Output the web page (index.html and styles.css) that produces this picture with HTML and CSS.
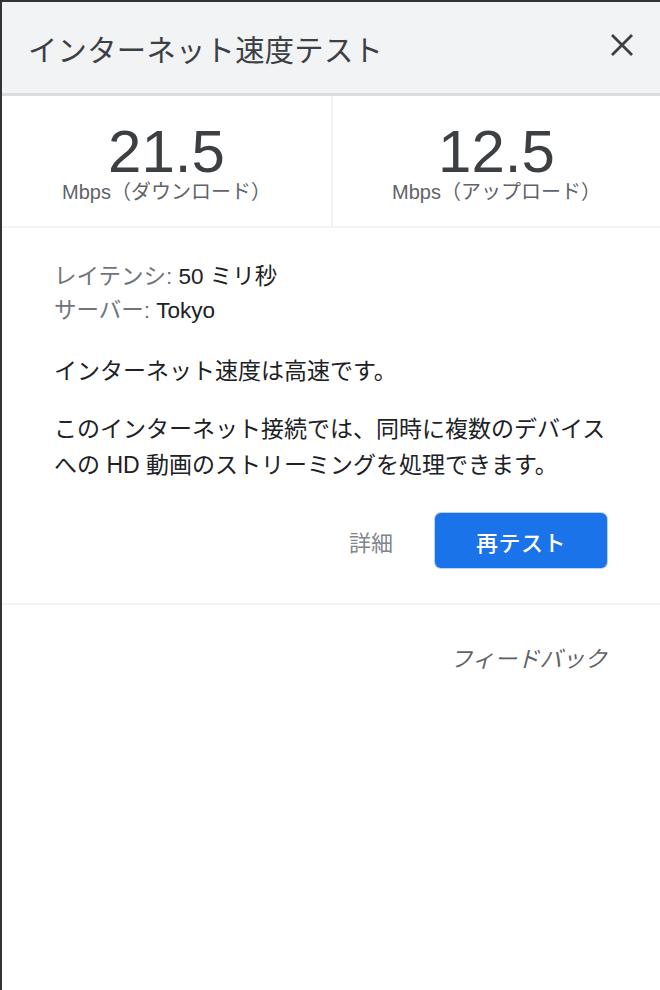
FILE: index.html
```html
<!DOCTYPE html>
<html lang="ja">
<head>
<meta charset="utf-8">
<title>インターネット速度テスト</title>
<link rel="stylesheet" href="styles.css">
</head>
<body>
<div class="frame">
  <header class="header">
    <h1 class="title">インターネット速度テスト</h1>
    <button class="close" aria-label="閉じる">
      <svg width="24" height="24" viewBox="0 0 24 24"><path d="M2 2 L22 22 M22 2 L2 22" stroke="#3c4043" stroke-width="2.8" stroke-linecap="butt" fill="none"/></svg>
    </button>
  </header>
  <section class="stats">
    <div class="stat">
      <div class="num">21.5</div>
      <div class="unit">Mbps（ダウンロード）</div>
    </div>
    <div class="stat">
      <div class="num">12.5</div>
      <div class="unit">Mbps（アップロード）</div>
    </div>
  </section>
  <section class="body">
    <div class="meta">
      <div><span class="label">レイテンシ:</span> <span class="value">50 ミリ秒</span></div>
      <div><span class="label">サーバー:</span> <span class="value">Tokyo</span></div>
    </div>
    <p class="text">インターネット速度は高速です。</p>
    <p class="text">このインターネット接続では、同時に複数のデバイスへの HD 動画のストリーミングを処理できます。</p>
    <div class="actions">
      <span class="details">詳細</span>
      <button class="retest">再テスト</button>
    </div>
  </section>
  <footer class="foot">
    <span class="feedback">フィードバック</span>
  </footer>
</div>
</body>
</html>
```
FILE: styles.css
```css
html, body {
  margin: 0;
  padding: 0;
  background: #333333;
  height: 100%;
}
.frame {
  margin: 2px 0 0 2px;
  background: #ffffff;
  min-height: 988px;
  font-family: "Liberation Sans", "Noto Sans CJK JP", sans-serif;
  color: #202124;
}
.header {
  height: 91px;
  background: #f1f3f4;
  border-bottom: 3px solid #dadce0;
  display: flex;
  align-items: center;
  justify-content: space-between;
  padding: 0 26px 0 26px;
}
.title {
  margin: 0;
  font-size: 29.3px;
  font-weight: normal;
  color: #3c4043;
  letter-spacing: 0.3px;
}
.close {
  border: 0;
  background: none;
  padding: 0;
  width: 24px;
  height: 24px;
  margin-top: -6px;
  display: flex;
}
.stats {
  display: grid;
  grid-template-columns: 1fr 1fr;
  border-bottom: 2px solid #f3f3f3;
}
.stat {
  padding: 26px 0 24px;
  text-align: center;
}
.stat + .stat {
  border-left: 2px solid #f3f3f3;
}
.num {
  font-size: 60px;
  line-height: 60px;
  color: #3c4043;
}
.unit {
  font-size: 20px;
  line-height: 20px;
  color: #5f6368;
}
.body {
  padding: 32px 53px 35px 52px;
  border-bottom: 2px solid #f3f3f3;
}
.meta {
  font-size: 22.5px;
  line-height: 34px;
}
.label {
  color: #70757a;
}
.value {
  color: #202124;
}
.text {
  margin: 25px 0 0;
  font-size: 23px;
  line-height: 36px;
  color: #202124;
}
.text + .text {
  margin-top: 22px;
}
.actions {
  margin-top: 30px;
  display: flex;
  justify-content: flex-end;
  align-items: center;
  gap: 42px;
}
.details {
  font-size: 22px;
  color: #80868b;
}
.retest {
  width: 172px;
  height: 55px;
  border: 0;
  border-radius: 6px;
  background: #1a73e8;
  box-shadow: 0 0 0 1px #b9d1f7;
  color: #ffffff;
  font-family: "Liberation Sans", "Noto Sans CJK JP", sans-serif;
  font-size: 22px;
  font-weight: 500;
  letter-spacing: 0.5px;
}
.foot {
  display: flex;
  justify-content: flex-end;
  padding: 36px 53px 0 0;
}
.feedback {
  font-size: 22.5px;
  font-style: italic;
  color: #5f6368;
}
```
